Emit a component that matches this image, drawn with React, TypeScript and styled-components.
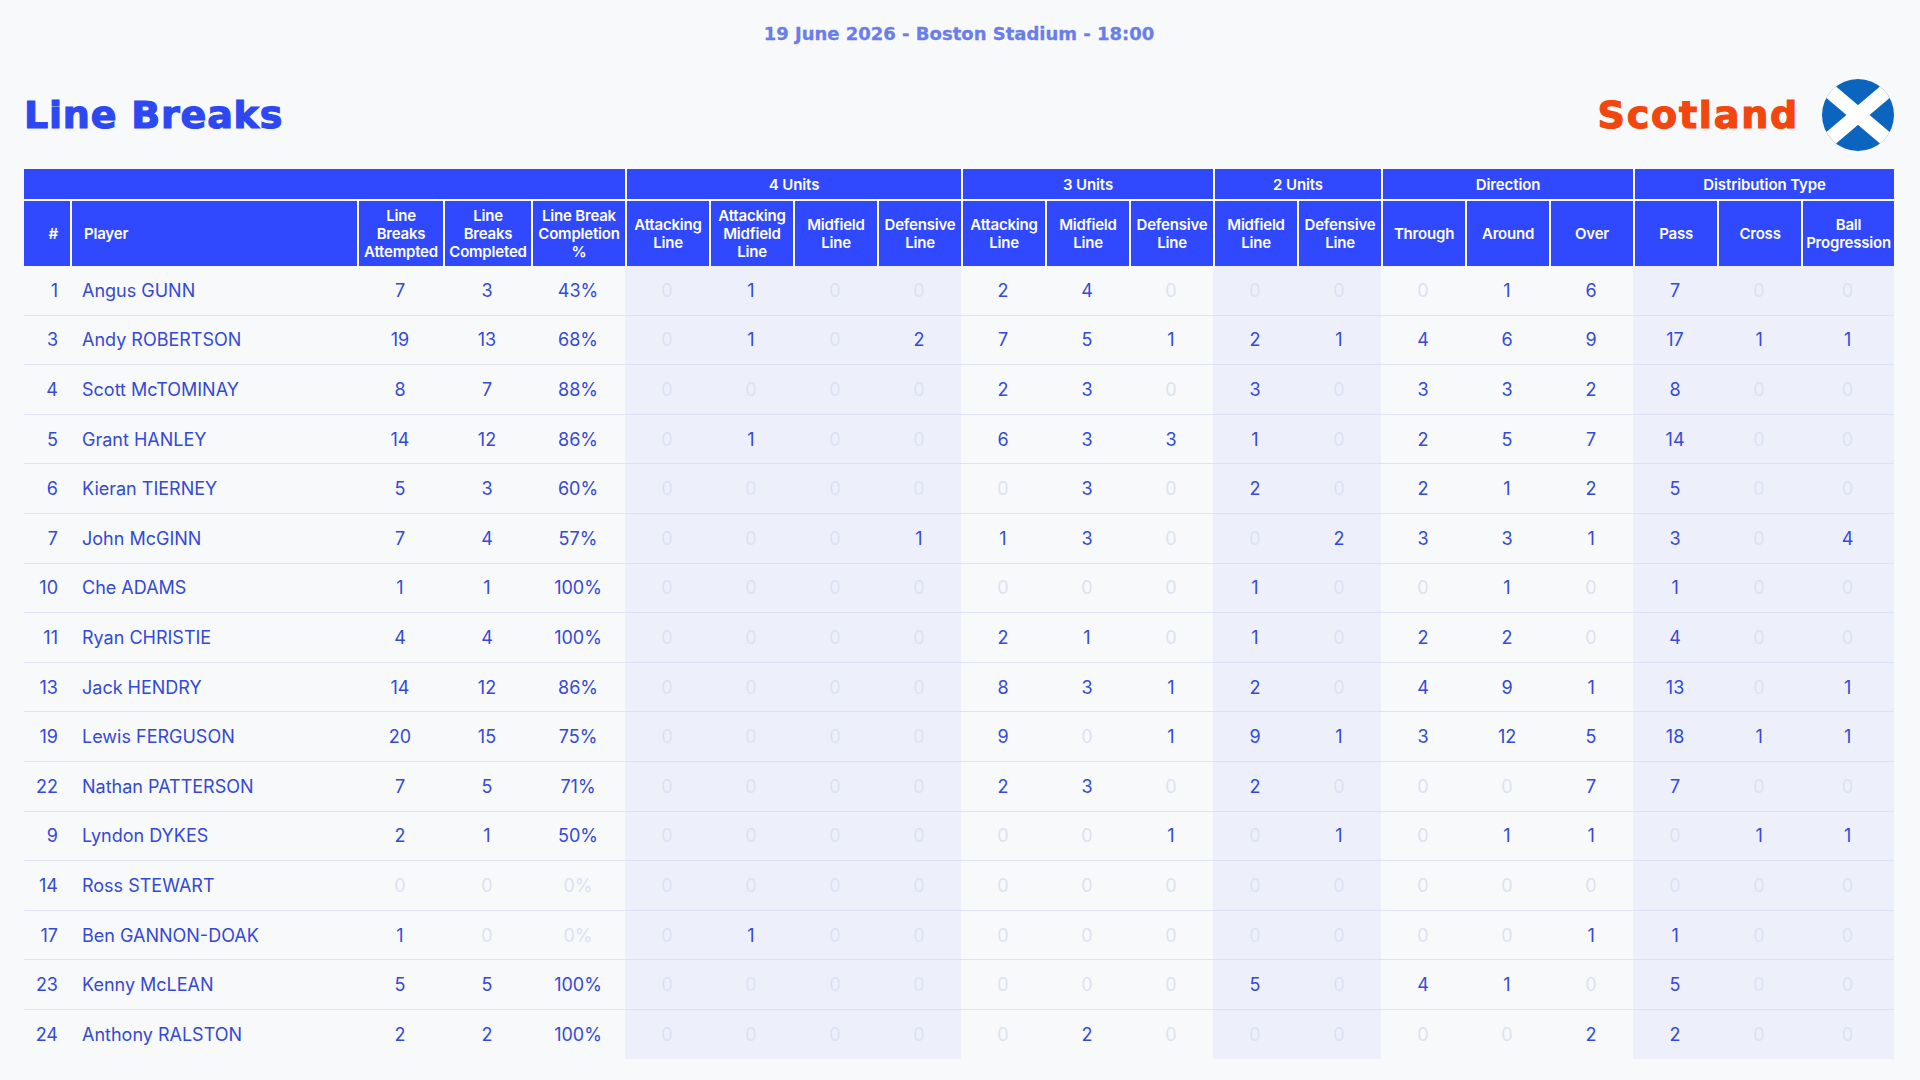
import React from "react";
import styled, { createGlobalStyle } from "styled-components";

const GlobalStyle = createGlobalStyle`
  html, body {
    margin: 0;
    padding: 0;
    background: #f8f9fb;
  }
`;

const Page = styled.div`
  width: 1920px;
  height: 1080px;
  box-sizing: border-box;
  padding: 22px 26px 0 24px;
  font-family: Inter, "Noto Sans", sans-serif;
`;

const DateLine = styled.div`
  text-align: center;
  font-family: "DejaVu Sans", sans-serif;
  font-weight: 700;
  font-size: 18px;
  line-height: 24px;
  color: #6b7de9;
  -webkit-text-stroke: 0.3px #6b7de9;
`;

const TitleBar = styled.div`
  margin-top: 32px;
  height: 74px;
  display: flex;
  align-items: center;
  justify-content: space-between;
`;

const BigText = styled.h1<{ $color: string; $spacing: number }>`
  margin: 0;
  font-family: "DejaVu Sans", sans-serif;
  font-weight: 700;
  font-size: 38px;
  letter-spacing: ${(p) => p.$spacing}px;
  line-height: 1;
  color: ${(p) => p.$color};
  -webkit-text-stroke: 1.2px ${(p) => p.$color};
`;

const Team = styled.div`
  display: flex;
  align-items: center;
  gap: 23px;
`;

const Table = styled.table`
  margin-top: 17px;
  width: 1870px;
  table-layout: fixed;
  border-collapse: separate;
  border-spacing: 0;
`;

const GroupHead = styled.th`
  height: 30px;
  padding: 0;
  background: #3049ff;
  color: #fff;
  font-size: 15px;
  font-weight: 600;
  letter-spacing: -0.1px;
  border-left: 2px solid #fff;
  border-bottom: 2px solid #fff;
  &:first-child {
    border-left: none;
  }
`;

const ColHead = styled.th<{ $align?: string }>`
  height: 65px;
  padding: 0 ${(p) => (p.$align === "right" ? "12px" : "2px")} 0
    ${(p) => (p.$align === "left" ? "12px" : "2px")};
  background: #3049ff;
  color: #fff;
  font-size: 15px;
  line-height: 18px;
  font-weight: 600;
  letter-spacing: -0.2px;
  text-align: ${(p) => p.$align || "center"};
  border-left: 2px solid #fff;
  &:first-child {
    border-left: none;
  }
`;

const Row = styled.tr`
  & + & td {
    border-top: 1px solid #dfe2f5;
  }
`;

const Cell = styled.td<{ $shade?: boolean; $faded?: boolean; $align?: string }>`
  height: 48.6px;
  padding: 0 ${(p) => (p.$align === "right" ? "12px" : "0")} 0
    ${(p) => (p.$align === "left" ? "12px" : "0")};
  text-align: ${(p) => p.$align || "center"};
  font-size: 18px;
  color: ${(p) => (p.$faded ? "#dde1f3" : "#3449d6")};
  background: ${(p) => (p.$shade ? "#edf0fb" : "transparent")};
  white-space: nowrap;
`;

function Flag() {
  return (
    <svg width="72" height="72" viewBox="0 0 72 72">
      <defs>
        <clipPath id="flagClip">
          <circle cx="36" cy="36" r="36" />
        </clipPath>
      </defs>
      <g clipPath="url(#flagClip)">
        <rect width="72" height="72" fill="#0b64bd" />
        <path d="M-4 2L76 70M76 2L-4 70" stroke="#fff" strokeWidth="15" />
      </g>
    </svg>
  );
}

const widths = [46, 287, 86, 88, 94, 84, 84, 84, 84, 84, 84, 84, 84, 84, 84, 84, 84, 84, 84, 93];

const groups = [
  { label: "", span: 5 },
  { label: "4 Units", span: 4 },
  { label: "3 Units", span: 3 },
  { label: "2 Units", span: 2 },
  { label: "Direction", span: 3 },
  { label: "Distribution Type", span: 3 },
];

const headers: string[][] = [
  ["#"],
  ["Player"],
  ["Line", "Breaks", "Attempted"],
  ["Line", "Breaks", "Completed"],
  ["Line Break", "Completion", "%"],
  ["Attacking", "Line"],
  ["Attacking", "Midfield", "Line"],
  ["Midfield", "Line"],
  ["Defensive", "Line"],
  ["Attacking", "Line"],
  ["Midfield", "Line"],
  ["Defensive", "Line"],
  ["Midfield", "Line"],
  ["Defensive", "Line"],
  ["Through"],
  ["Around"],
  ["Over"],
  ["Pass"],
  ["Cross"],
  ["Ball", "Progression"],
];

// columns 5-8, 12-13, 17-19 sit on the tinted background
const shaded = new Set([5, 6, 7, 8, 12, 13, 17, 18, 19]);

const players: (string | number)[][] = [
  [1, "Angus GUNN", 7, 3, "43%", 0, 1, 0, 0, 2, 4, 0, 0, 0, 0, 1, 6, 7, 0, 0],
  [3, "Andy ROBERTSON", 19, 13, "68%", 0, 1, 0, 2, 7, 5, 1, 2, 1, 4, 6, 9, 17, 1, 1],
  [4, "Scott McTOMINAY", 8, 7, "88%", 0, 0, 0, 0, 2, 3, 0, 3, 0, 3, 3, 2, 8, 0, 0],
  [5, "Grant HANLEY", 14, 12, "86%", 0, 1, 0, 0, 6, 3, 3, 1, 0, 2, 5, 7, 14, 0, 0],
  [6, "Kieran TIERNEY", 5, 3, "60%", 0, 0, 0, 0, 0, 3, 0, 2, 0, 2, 1, 2, 5, 0, 0],
  [7, "John McGINN", 7, 4, "57%", 0, 0, 0, 1, 1, 3, 0, 0, 2, 3, 3, 1, 3, 0, 4],
  [10, "Che ADAMS", 1, 1, "100%", 0, 0, 0, 0, 0, 0, 0, 1, 0, 0, 1, 0, 1, 0, 0],
  [11, "Ryan CHRISTIE", 4, 4, "100%", 0, 0, 0, 0, 2, 1, 0, 1, 0, 2, 2, 0, 4, 0, 0],
  [13, "Jack HENDRY", 14, 12, "86%", 0, 0, 0, 0, 8, 3, 1, 2, 0, 4, 9, 1, 13, 0, 1],
  [19, "Lewis FERGUSON", 20, 15, "75%", 0, 0, 0, 0, 9, 0, 1, 9, 1, 3, 12, 5, 18, 1, 1],
  [22, "Nathan PATTERSON", 7, 5, "71%", 0, 0, 0, 0, 2, 3, 0, 2, 0, 0, 0, 7, 7, 0, 0],
  [9, "Lyndon DYKES", 2, 1, "50%", 0, 0, 0, 0, 0, 0, 1, 0, 1, 0, 1, 1, 0, 1, 1],
  [14, "Ross STEWART", 0, 0, "0%", 0, 0, 0, 0, 0, 0, 0, 0, 0, 0, 0, 0, 0, 0, 0],
  [17, "Ben GANNON-DOAK", 1, 0, "0%", 0, 1, 0, 0, 0, 0, 0, 0, 0, 0, 0, 1, 1, 0, 0],
  [23, "Kenny McLEAN", 5, 5, "100%", 0, 0, 0, 0, 0, 0, 0, 5, 0, 4, 1, 0, 5, 0, 0],
  [24, "Anthony RALSTON", 2, 2, "100%", 0, 0, 0, 0, 0, 2, 0, 0, 0, 0, 0, 2, 2, 0, 0],
];

const alignOf = (i: number) => (i === 0 ? "right" : i === 1 ? "left" : undefined);

export default function App() {
  return (
    <Page>
      <GlobalStyle />
      <DateLine>19 June 2026 - Boston Stadium - 18:00</DateLine>
      <TitleBar>
        <BigText $color="#2d48f2" $spacing={0.8}>
          Line Breaks
        </BigText>
        <Team>
          <BigText $color="#f2460e" $spacing={1.8}>
            Scotland
          </BigText>
          <Flag />
        </Team>
      </TitleBar>
      <Table>
        <colgroup>
          {widths.map((w, i) => (
            <col key={i} style={{ width: w }} />
          ))}
        </colgroup>
        <thead>
          <tr>
            {groups.map((g, i) => (
              <GroupHead key={i} colSpan={g.span}>
                {g.label}
              </GroupHead>
            ))}
          </tr>
          <tr>
            {headers.map((lines, i) => (
              <ColHead key={i} $align={alignOf(i)}>
                {lines.map((l, j) => (
                  <React.Fragment key={j}>
                    {j > 0 && <br />}
                    {l}
                  </React.Fragment>
                ))}
              </ColHead>
            ))}
          </tr>
        </thead>
        <tbody>
          {players.map((p, r) => (
            <Row key={r}>
              {p.map((v, i) => (
                <Cell
                  key={i}
                  $align={alignOf(i)}
                  $shade={shaded.has(i)}
                  $faded={i > 1 && (v === 0 || v === "0%")}
                >
                  {v}
                </Cell>
              ))}
            </Row>
          ))}
        </tbody>
      </Table>
    </Page>
  );
}
